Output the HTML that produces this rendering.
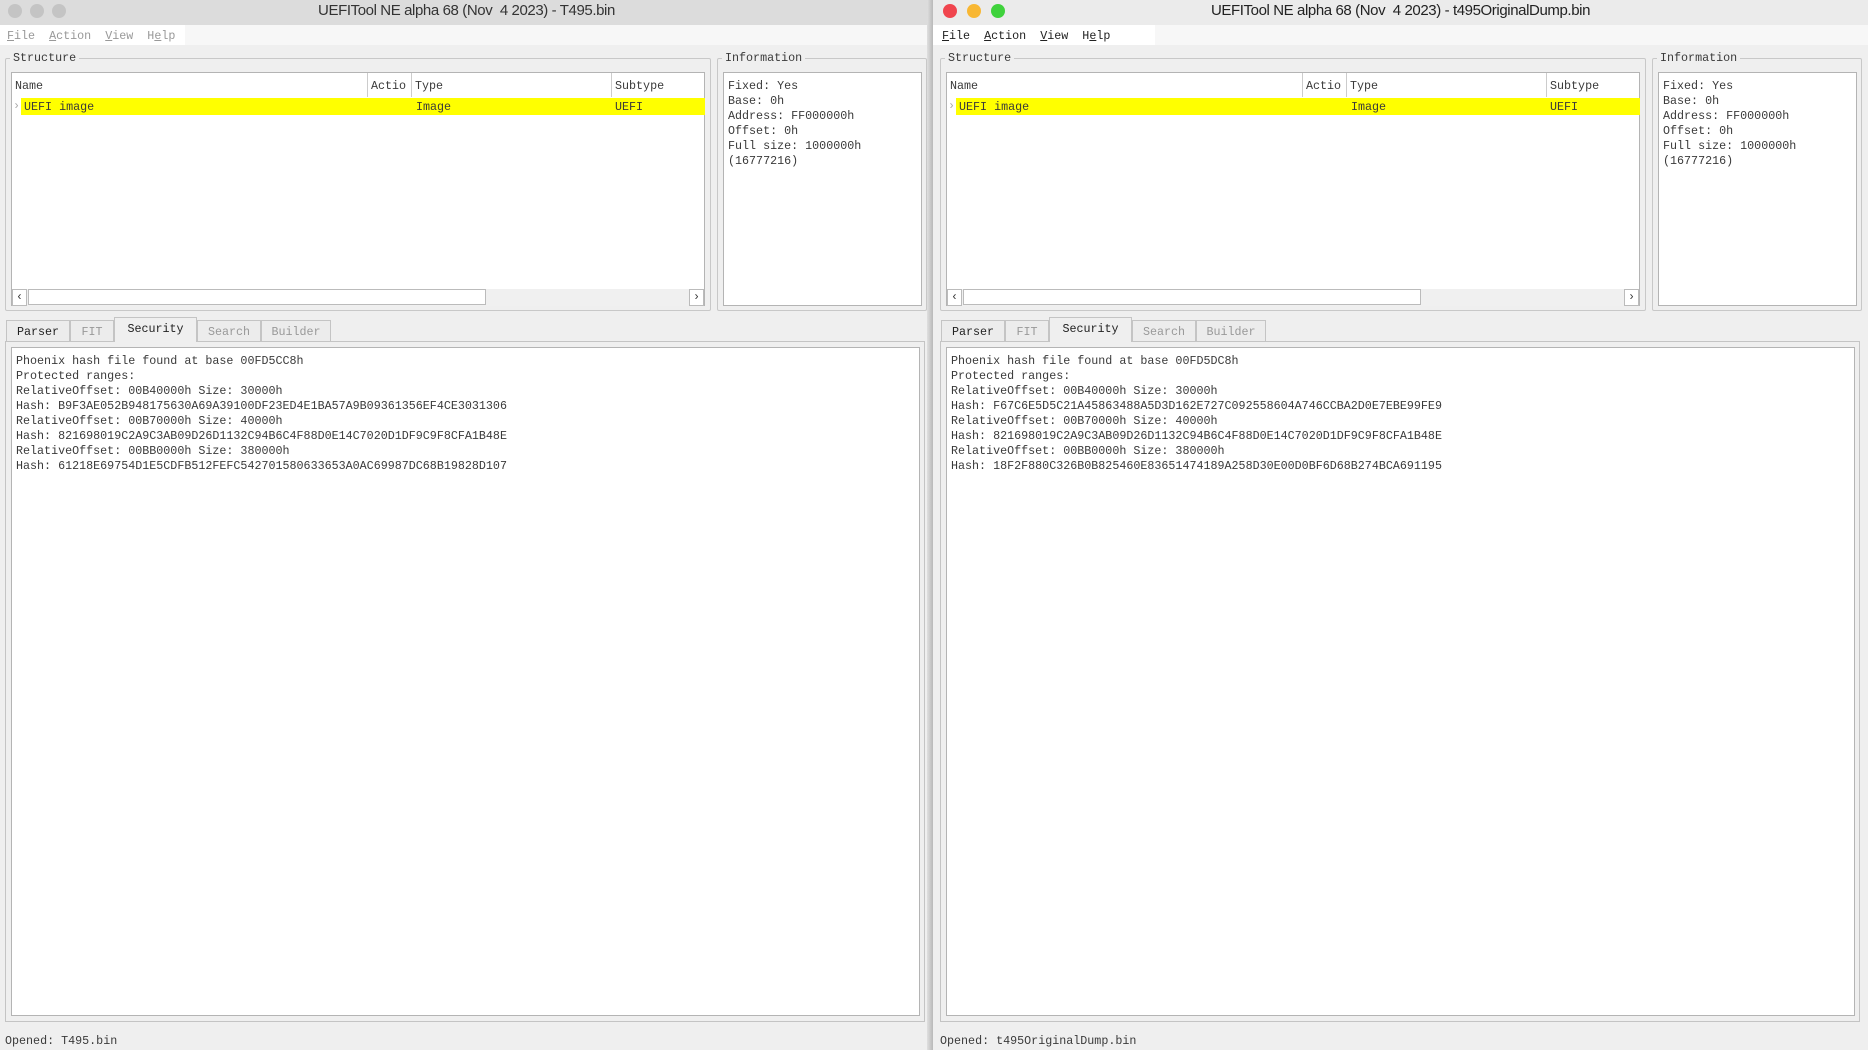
<!DOCTYPE html>
<html><head><meta charset="utf-8"><style>
*{margin:0;padding:0;box-sizing:border-box}
body{width:1868px;height:1050px;background:#efefef;position:relative;overflow:hidden;font-family:"Liberation Mono",monospace;font-size:11.7px;color:#3a3a3a}
.win{position:absolute;top:0;width:935px;height:1050px;background:#efefef}
.a{position:absolute;white-space:pre}
.title{position:absolute;left:0;top:0;width:100%;height:25px;background:#e4e4e4;font-family:"Liberation Sans",sans-serif;font-size:15px;color:#333;text-align:center;line-height:21px;letter-spacing:-0.4px}
.menu{position:absolute;left:0;top:25px;width:100%;height:20px;background:#f7f7f7}
.menu .w{position:absolute;left:0;top:0;width:222px;height:20px;background:#fff}
.grp{position:absolute;border:1px solid #c8c8c8;border-radius:2px}
.lbl{position:absolute;background:#efefef;padding:0 3px;top:-8px;left:4px;line-height:14px}
.box{position:absolute;background:#fff;border:1px solid #b4b4b4}
.tab{position:absolute;top:320px;height:21px;border:1px solid #c4c4c4;border-bottom:none;background:#ececec;text-align:center;line-height:22px;color:#999}
.line{position:absolute;line-height:15px;white-space:pre}
</style></head><body>

<!-- LEFT WINDOW -->
<div class="win" style="left:0;width:933px">
<div class="title" style="background:#dcdcdc">UEFITool NE alpha 68 (Nov&nbsp; 4 2023) - T495.bin</div>
<div class="a" style="left:8px;top:4px;width:14px;height:14px;border-radius:7px;background:#c4c4c4"></div>
<div class="a" style="left:30px;top:4px;width:14px;height:14px;border-radius:7px;background:#c4c4c4"></div>
<div class="a" style="left:52px;top:4px;width:14px;height:14px;border-radius:7px;background:#c4c4c4"></div>
<div class="menu"><div class="w" style="width:185px"></div>
<div class="a" style="left:7px;top:4px;color:#999"><u>F</u>ile  <u>A</u>ction  <u>V</u>iew  H<u>e</u>lp</div></div>
<div class="grp" style="left:5px;top:58px;width:706px;height:253px"><span class="lbl">Structure</span></div>
<div class="box" style="left:11px;top:72px;width:694px;height:234px">
 <div class="a" style="left:355px;top:0;width:1px;height:24px;background:#ccc"></div>
 <div class="a" style="left:399px;top:0;width:1px;height:24px;background:#ccc"></div>
 <div class="a" style="left:599px;top:0;width:1px;height:24px;background:#ccc"></div>
 <div class="a" style="left:3px;top:6px">Name</div>
 <div class="a" style="left:359px;top:6px">Actio</div>
 <div class="a" style="left:403px;top:6px">Type</div>
 <div class="a" style="left:603px;top:6px">Subtype</div>
 <div class="a" style="left:9px;top:25px;width:684px;height:17px;background:#ffff00"></div>
 <div class="a" style="left:1px;top:26px;color:#aaa">›</div>
 <div class="a" style="left:12px;top:27px">UEFI image</div>
 <div class="a" style="left:404px;top:27px">Image</div>
 <div class="a" style="left:603px;top:27px">UEFI</div>
 <div class="a" style="left:0;top:216px;width:692px;height:17px;background:#f0f0f0"></div>
 <div class="a" style="left:0;top:216px;width:15px;height:17px;border:1px solid #bbb;background:#fff;text-align:center;line-height:14px">‹</div>
 <div class="a" style="left:16px;top:216px;width:458px;height:16px;border:1px solid #bbb;background:#fff"></div>
 <div class="a" style="left:677px;top:216px;width:15px;height:17px;border:1px solid #bbb;background:#fff;text-align:center;line-height:14px">›</div>
</div>
<div class="grp" style="left:717px;top:58px;width:210px;height:253px"><span class="lbl">Information</span></div>
<div class="box" style="left:723px;top:72px;width:199px;height:234px">
 <div class="line" style="left:4px;top:6px">Fixed: Yes
Base: 0h
Address: FF000000h
Offset: 0h
Full size: 1000000h
(16777216)</div></div>
<div class="a" style="left:5px;top:341px;width:920px;height:681px;border:1px solid #c4c4c4"></div>
<div class="tab" style="left:6px;width:64px;color:#222">Parser</div>
<div class="tab" style="left:70px;width:44px">FIT</div>
<div class="tab" style="left:114px;width:83px;top:317px;height:25px;background:#efefef;color:#222;line-height:22px">Security</div>
<div class="tab" style="left:197px;width:64px">Search</div>
<div class="tab" style="left:261px;width:70px">Builder</div>
<div class="box" style="left:11px;top:347px;width:909px;height:669px">
<div class="line" style="left:4px;top:6px">Phoenix hash file found at base 00FD5CC8h
Protected ranges:
RelativeOffset: 00B40000h Size: 30000h
Hash: B9F3AE052B948175630A69A39100DF23ED4E1BA57A9B09361356EF4CE3031306
RelativeOffset: 00B70000h Size: 40000h
Hash: 821698019C2A9C3AB09D26D1132C94B6C4F88D0E14C7020D1DF9C9F8CFA1B48E
RelativeOffset: 00BB0000h Size: 380000h
Hash: 61218E69754D1E5CDFB512FEFC542701580633653A0AC69987DC68B19828D107</div></div>
<div class="a" style="left:5px;top:1034px">Opened: T495.bin</div>
</div>
<div class="a" style="left:927px;top:0;width:6px;height:1050px;background:linear-gradient(90deg,#e0e0e0,#b8b8b8)"></div>

<!-- RIGHT WINDOW -->
<div class="win" style="left:933px;width:935px">
<div class="title" style="background:#ebebeb;color:#222">UEFITool NE alpha 68 (Nov&nbsp; 4 2023) - t495OriginalDump.bin</div>
<div class="a" style="left:10px;top:4px;width:14px;height:14px;border-radius:7px;background:#f0454e"></div>
<div class="a" style="left:34px;top:4px;width:14px;height:14px;border-radius:7px;background:#f8b733"></div>
<div class="a" style="left:58px;top:4px;width:14px;height:14px;border-radius:7px;background:#3fd23c"></div>
<div class="menu"><div class="w"></div>
<div class="a" style="left:9px;top:4px;color:#222"><u>F</u>ile  <u>A</u>ction  <u>V</u>iew  H<u>e</u>lp</div></div>
<div class="grp" style="left:7px;top:58px;width:706px;height:253px"><span class="lbl">Structure</span></div>
<div class="box" style="left:13px;top:72px;width:694px;height:234px">
 <div class="a" style="left:355px;top:0;width:1px;height:24px;background:#ccc"></div>
 <div class="a" style="left:399px;top:0;width:1px;height:24px;background:#ccc"></div>
 <div class="a" style="left:599px;top:0;width:1px;height:24px;background:#ccc"></div>
 <div class="a" style="left:3px;top:6px">Name</div>
 <div class="a" style="left:359px;top:6px">Actio</div>
 <div class="a" style="left:403px;top:6px">Type</div>
 <div class="a" style="left:603px;top:6px">Subtype</div>
 <div class="a" style="left:9px;top:25px;width:684px;height:17px;background:#ffff00"></div>
 <div class="a" style="left:1px;top:26px;color:#aaa">›</div>
 <div class="a" style="left:12px;top:27px">UEFI image</div>
 <div class="a" style="left:404px;top:27px">Image</div>
 <div class="a" style="left:603px;top:27px">UEFI</div>
 <div class="a" style="left:0;top:216px;width:692px;height:17px;background:#f0f0f0"></div>
 <div class="a" style="left:0;top:216px;width:15px;height:17px;border:1px solid #bbb;background:#fff;text-align:center;line-height:14px">‹</div>
 <div class="a" style="left:16px;top:216px;width:458px;height:16px;border:1px solid #bbb;background:#fff"></div>
 <div class="a" style="left:677px;top:216px;width:15px;height:17px;border:1px solid #bbb;background:#fff;text-align:center;line-height:14px">›</div>
</div>
<div class="grp" style="left:719px;top:58px;width:210px;height:253px"><span class="lbl">Information</span></div>
<div class="box" style="left:725px;top:72px;width:199px;height:234px">
 <div class="line" style="left:4px;top:6px">Fixed: Yes
Base: 0h
Address: FF000000h
Offset: 0h
Full size: 1000000h
(16777216)</div></div>
<div class="a" style="left:7px;top:341px;width:920px;height:681px;border:1px solid #c4c4c4"></div>
<div class="tab" style="left:8px;width:64px;color:#222">Parser</div>
<div class="tab" style="left:72px;width:44px">FIT</div>
<div class="tab" style="left:116px;width:83px;top:317px;height:25px;background:#efefef;color:#222;line-height:22px">Security</div>
<div class="tab" style="left:199px;width:64px">Search</div>
<div class="tab" style="left:263px;width:70px">Builder</div>
<div class="box" style="left:13px;top:347px;width:909px;height:669px">
<div class="line" style="left:4px;top:6px">Phoenix hash file found at base 00FD5DC8h
Protected ranges:
RelativeOffset: 00B40000h Size: 30000h
Hash: F67C6E5D5C21A45863488A5D3D162E727C092558604A746CCBA2D0E7EBE99FE9
RelativeOffset: 00B70000h Size: 40000h
Hash: 821698019C2A9C3AB09D26D1132C94B6C4F88D0E14C7020D1DF9C9F8CFA1B48E
RelativeOffset: 00BB0000h Size: 380000h
Hash: 18F2F880C326B0B825460E83651474189A258D30E00D0BF6D68B274BCA691195</div></div>
<div class="a" style="left:7px;top:1034px">Opened: t495OriginalDump.bin</div>
</div>
</body></html>
